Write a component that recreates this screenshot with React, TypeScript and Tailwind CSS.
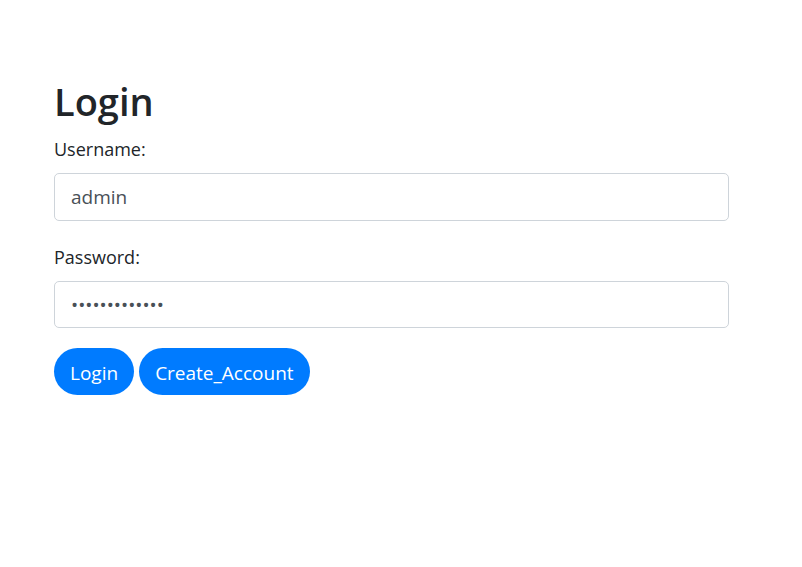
export default function App() {
  return (
    <div className="min-h-screen bg-white font-['Open_Sans',sans-serif] text-[#212529]">
      <div className="w-[675px] ml-[54px] pt-[77px]">
        <h1 className="text-[38px] leading-[48px] font-semibold">Login</h1>
        <form className="flex flex-col">
          <label className="mt-[12px] text-[18px] leading-[24px]">Username:</label>
          <input
            type="text"
            defaultValue="admin"
            className="mt-[12px] h-[48px] w-full rounded-[5px] border border-[#ced4da] bg-white px-[16px] text-[19px] text-[#495057] outline-none"
          />
          <label className="mt-[24px] text-[18px] leading-[24px]">Password:</label>
          <input
            type="password"
            defaultValue="adminpassword"
            className="mt-[12px] h-[47px] w-full rounded-[5px] border border-[#ced4da] bg-white px-[16px] text-[19px] text-[#495057] outline-none"
          />
          <div className="mt-[20px] flex gap-[5px]">
            <button
              type="button"
              className="h-[47px] rounded-full bg-[#007bff] px-[16px] pt-[3px] text-[19px] text-white"
            >
              Login
            </button>
            <button
              type="button"
              className="h-[47px] rounded-full bg-[#007bff] px-[16px] pt-[3px] text-[19px] text-white"
            >
              Create_Account
            </button>
          </div>
        </form>
      </div>
    </div>
  );
}
